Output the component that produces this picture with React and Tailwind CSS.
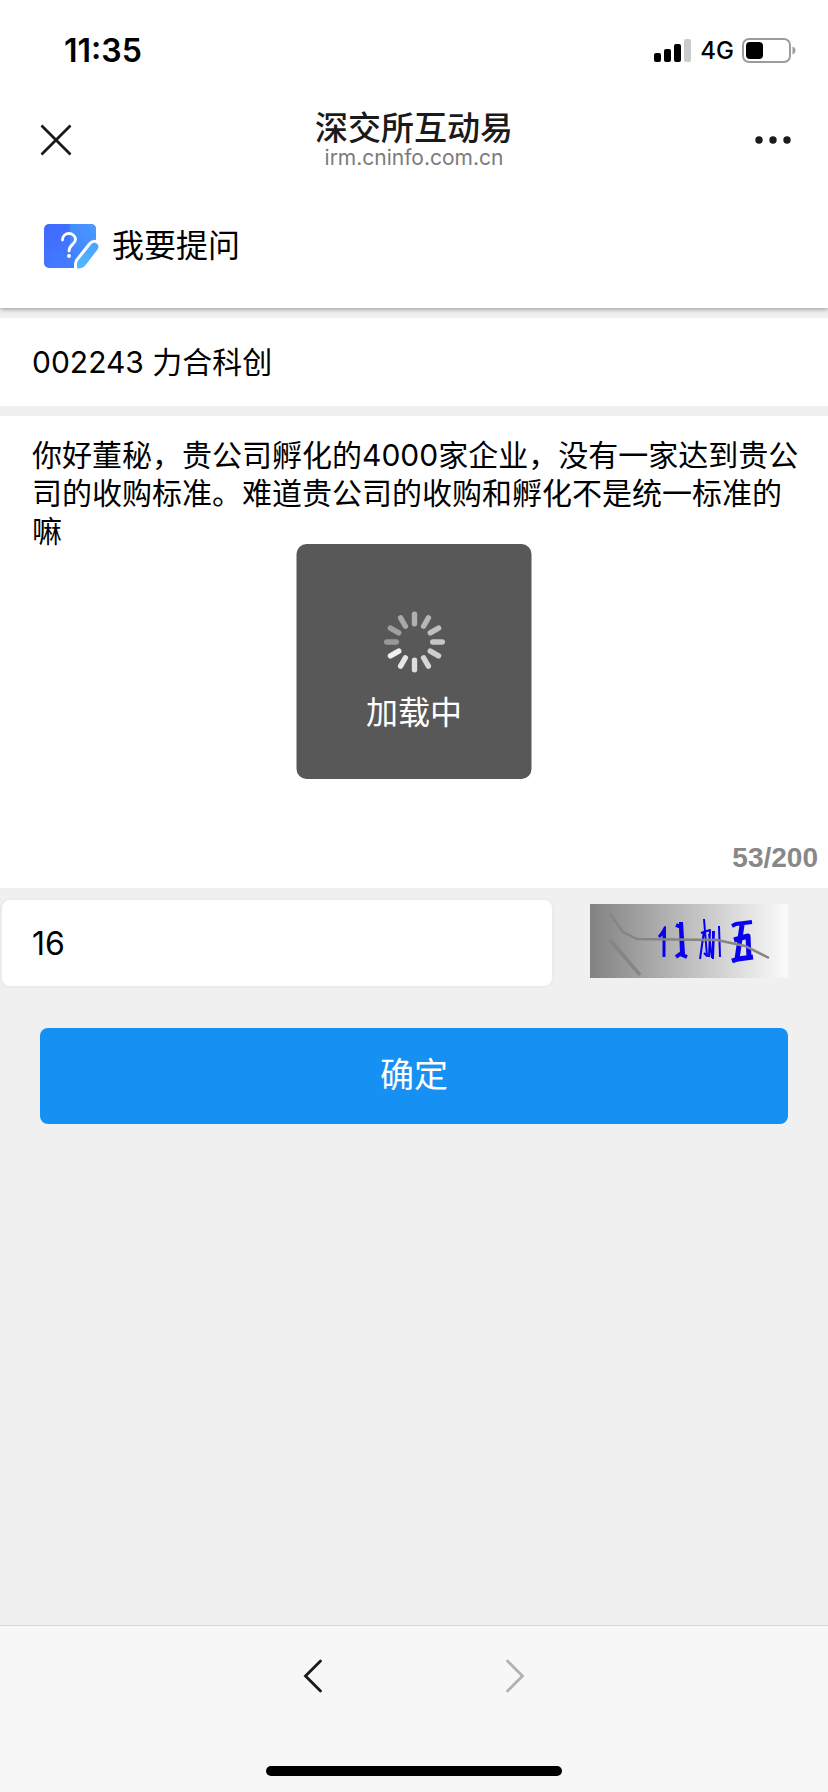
const leaves = [
  { angle: 0, color: '#b0b0b0' },
  { angle: 30, color: '#b6b6b6' },
  { angle: 60, color: '#bfbfbf' },
  { angle: 90, color: '#c6c6c6' },
  { angle: 120, color: '#cecece' },
  { angle: 150, color: '#d6d6d6' },
  { angle: 180, color: '#dedede' },
  { angle: 210, color: '#e6e6e6' },
  { angle: 240, color: '#f0f0f0' },
  { angle: 270, color: '#989898' },
  { angle: 300, color: '#a0a0a0' },
  { angle: 330, color: '#a8a8a8' },
];

function StatusBar() {
  return (
    <div className="flex h-24 items-center justify-between pl-16 pr-8 pt-1.5">
      <span className="text-[32px] leading-10 font-semibold text-black">11:35</span>
      <div className="flex items-center gap-2">
        <svg width="38" height="24" viewBox="0 0 38 24" aria-hidden="true">
          <rect x="0" y="14" width="7" height="9" rx="2" />
          <rect x="10" y="10" width="7" height="13" rx="2" />
          <rect x="20" y="5" width="7" height="18" rx="2" />
          <rect x="30" y="0" width="7" height="23" rx="2" fill="#cbcbcb" />
        </svg>
        <span className="text-2xl leading-8 font-medium text-black">4G</span>
        <svg width="54" height="26" viewBox="0 0 54 26" aria-hidden="true">
          <rect x="1" y="1" width="47" height="23" rx="6" fill="none" stroke="#9c9c9c" strokeWidth="2" />
          <rect x="4" y="4" width="17" height="17" rx="4" />
          <path d="M50.500 8.500c2 .8 3 2.200 3 4s-1 3.200-3 4z" fill="#9c9c9c" />
        </svg>
      </div>
    </div>
  );
}

function NavBar() {
  return (
    <header className="grid grid-cols-[1fr_auto_1fr] items-center px-9 pb-4 pt-3.5">
      <button type="button" aria-label="关闭" className="flex size-10 items-center justify-start">
        <svg width="40" height="40" viewBox="0 0 40 40" fill="none" stroke="#1a1a1a" strokeWidth="2.800">
          <path d="M5.500 5.500l29 29M34.500 5.500l-29 29" />
        </svg>
      </button>
      <div className="flex flex-col items-center">
        <h1 className="text-[33px] leading-9 font-medium text-[#1a1a1a]">深交所互动易</h1>
        <p className="text-[21px] leading-6 text-[#7b7b7b]">irm.cninfo.com.cn</p>
      </div>
      <button type="button" aria-label="更多" className="flex h-10 items-center justify-self-end">
        <svg width="38" height="8" viewBox="0 0 38 8" fill="#1a1a1a">
          <circle cx="5" cy="4" r="3.700" />
          <circle cx="19" cy="4" r="3.700" />
          <circle cx="33" cy="4" r="3.700" />
        </svg>
      </button>
    </header>
  );
}

function AskIcon() {
  const pen = 'M33 45.500V41c0-1.500.4-2.500 1.400-3.700L47 21.500c1.700-1.900 4.300-2.200 6-.7s1.900 3.800.5 5.700L42 41.500c-2.200 3-4.500 4-9 4z';
  return (
    <svg width="56" height="46" viewBox="0 0 56 46" aria-hidden="true">
      <defs>
        <linearGradient id="askLeft" x1="0" y1="0" x2="1" y2="1">
          <stop offset="0" stopColor="#3f68ff" />
          <stop offset="1" stopColor="#4585ff" />
        </linearGradient>
        <linearGradient id="askRight" x1="1" y1="0" x2="0" y2="1">
          <stop offset="0" stopColor="#4a9bff" />
          <stop offset="1" stopColor="#3f7dff" />
        </linearGradient>
        <linearGradient id="askPen" x1="1" y1="0" x2="0" y2="1">
          <stop offset="0" stopColor="#49a0ff" />
          <stop offset="1" stopColor="#4fbcff" />
        </linearGradient>
      </defs>
      <rect x="0" y="1" width="52" height="44" rx="5" fill="url(#askLeft)" />
      <path d="M26 1h21a5 5 0 0 1 5 5v39H26z" fill="url(#askRight)" />
      <path d="M18.500 17c0-4 3-6.500 6.500-6.500s6.500 2.500 6.500 6c0 5-6.500 5-6.500 11.500" fill="none" stroke="#fff" strokeWidth="2.800" strokeLinecap="round" />
      <circle cx="25" cy="33" r="2" fill="#fff" />
      <path d="M33 46l20-26h3v26z" fill="#fff" />
      <path d={pen} fill="#fff" stroke="#fff" strokeWidth="6" />
      <path d={pen} fill="url(#askPen)" />
    </svg>
  );
}

function Captcha() {
  return (
    <svg viewBox="0 0 198 74" className="block w-full" role="img" aria-label="验证码">
      <defs>
        <linearGradient id="captchaBg" x1="0" y1="0" x2="1" y2="0">
          <stop offset="0" stopColor="#828282" />
          <stop offset="1" stopColor="#fbfbfb" />
        </linearGradient>
      </defs>
      <rect width="198" height="74" fill="url(#captchaBg)" />
      <g fill="none" stroke="#0a00f0" strokeLinejoin="round">
        <path d="M69 33l5-6v26" strokeWidth="3" />
        <path d="M70 32l5-9v12" strokeWidth="2" />
        <path d="M86 21l5 2 1 28M91 18l2 32" strokeWidth="4" />
        <path d="M86 53l4-3 7 3" strokeWidth="4" />
        <path d="M114 15l3 37-3-3M111 29l9-3-1 27M114 27l-4 28M123 27v28M124 27l-1 27M129 22l1 31M119 30l3 24" strokeWidth="2" />
        <path d="M142 22l4-2 16-2" strokeWidth="4" />
        <path d="M152 21l-5 34M144 36l14-4 1 22M142 57l6-2 15-2" strokeWidth="5" />
      </g>
      <g fill="none" stroke="#858585">
        <path d="M20 10l13 18 14 7 80 1 28 6 24 12" strokeWidth="2.500" />
        <path d="M20 36l30 35" strokeWidth="3.500" />
      </g>
    </svg>
  );
}

function LoadingToast() {
  return (
    <div
      role="status"
      className="absolute left-1/2 top-32 flex size-[235px] -translate-x-1/2 flex-col items-center rounded-[10px] bg-[#585858] pt-[67px]"
    >
      <svg width="62" height="62" viewBox="-31 -31 62 62" aria-hidden="true">
        {leaves.map(({ angle, color }) => (
          <rect key={angle} x="-2.700" y="-30.500" width="5.400" height="15" rx="2.700" fill={color} transform={`rotate(${angle})`} />
        ))}
      </svg>
      <p className="mt-4 text-[32px] leading-12 text-white">加载中</p>
    </div>
  );
}

export default function App() {
  return (
    <div className="flex min-h-screen flex-col bg-[#f0f0f0] font-[Inter,'Noto_Sans_CJK_SC',sans-serif] text-black">
      <div className="bg-white shadow-[0_1px_5px_rgba(0,0,0,0.4)]">
        <StatusBar />
        <NavBar />
        <div className="flex items-center gap-3 px-11 pb-[38px] pt-9">
          <AskIcon />
          <h2 className="text-[32px] leading-12 font-normal">我要提问</h2>
        </div>
      </div>

      <main className="flex flex-1 flex-col gap-2.5 pt-2.5">
        <input
          aria-label="公司"
          defaultValue="002243 力合科创"
          className="h-22 w-full bg-white px-8 pb-1 text-[30px] outline-none"
        />

        <div className="relative flex flex-col bg-white">
          <textarea
            aria-label="提问内容"
            maxLength={200}
            defaultValue="你好董秘，贵公司孵化的4000家企业，没有一家达到贵公司的收购标准。难道贵公司的收购和孵化不是统一标准的嘛"
            className="block h-104 w-full resize-none overflow-hidden bg-white pl-8 pr-6 pt-5 text-[30px] leading-[38px] outline-none"
          />
          <p className="h-14 pr-2.5 text-right font-['Liberation_Sans',sans-serif] text-[28px] leading-13 font-bold text-[#888888]">
            53/200
          </p>
          <LoadingToast />
        </div>

        <form className="flex flex-col gap-10" onSubmit={(e) => e.preventDefault()}>
          <div className="flex items-center pr-10">
            <input
              aria-label="验证码答案"
              defaultValue="16"
              className="h-[90px] min-w-0 flex-1 rounded-[10px] border-2 border-[#ebebeb] bg-white px-[30px] text-[32px] outline-none"
            />
            <button type="button" className="ml-9 w-[198px] pb-1">
              <Captcha />
            </button>
          </div>
          <button type="submit" className="mx-10 h-24 rounded-lg bg-[#1690f2] pb-1 text-[34px] text-white">
            确定
          </button>
        </form>
      </main>

      <footer className="flex flex-col items-center border-t border-[#d6d6d6] bg-[#f7f7f7] pb-4">
        <nav className="flex h-25 items-center gap-[162px]">
          <button type="button" aria-label="后退" className="flex size-10 items-center justify-center">
            <svg width="20" height="36" viewBox="0 0 20 36" fill="none" stroke="#1a1a1a" strokeWidth="2.800" strokeLinecap="round">
              <path d="M17.500 3L2.500 18l15 15" />
            </svg>
          </button>
          <button type="button" aria-label="前进" className="flex size-10 items-center justify-center">
            <svg width="20" height="36" viewBox="0 0 20 36" fill="none" stroke="#b2b2b2" strokeWidth="2.800" strokeLinecap="round">
              <path d="M2.500 3l15 15-15 15" />
            </svg>
          </button>
        </nav>
        <div className="mt-10 h-2.5 w-[296px] rounded-full bg-black" />
      </footer>
    </div>
  );
}
